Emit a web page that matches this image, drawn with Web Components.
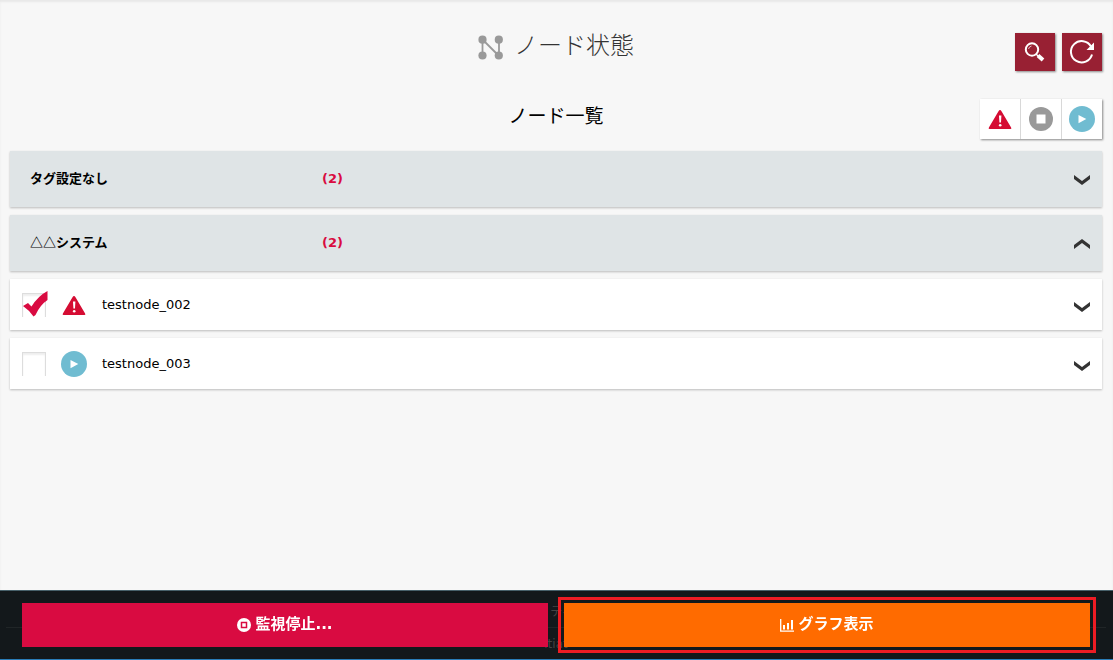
<!DOCTYPE html>
<html lang="ja">
<head>
<meta charset="utf-8">
<meta name="viewport" content="width=device-width, initial-scale=1">
<title>ノード状態</title>
<style>
  body {
    margin: 0;
    background: #f7f7f7;
    color: #000;
    font-family: "DejaVu Sans", "Noto Sans CJK JP", sans-serif;
    font-size: 13px;
    line-height: 20px;
  }
</style>
</head>
<body>
<node-app></node-app>

<script>
const ICONS = {
  nodes: '<svg viewBox="0 0 26 26" width="26" height="26" aria-hidden="true"><path d="M4.500 4.500V21M21 4.500V21M4.500 4.500L21 21" stroke="#999" stroke-width="1.800" fill="none"/><g fill="#999"><circle cx="4.500" cy="4.700" r="4.100"/><circle cx="20.800" cy="4.700" r="4.100"/><circle cx="4.500" cy="20.500" r="4.100"/><circle cx="20.800" cy="20.500" r="4.100"/></g></svg>',
  search: '<svg viewBox="0 0 40 38" width="40" height="38" aria-hidden="true"><circle cx="17" cy="16.500" r="6.200" fill="none" stroke="#fff" stroke-width="2"/><path d="M13.500 16a4 4 0 0 1 3-3" fill="none" stroke="#fff" stroke-width="1" opacity=".7"/><path d="M21 21l2 2" stroke="#fff" stroke-width="1.200"/><path d="M23 22.500l5 4.500" stroke="#fff" stroke-width="4"/></svg>',
  refresh: '<svg viewBox="0 0 40 38" width="40" height="38" aria-hidden="true"><path d="M29 13.500A10.700 10.700 0 1 0 30 21.500" fill="none" stroke="#fff" stroke-width="2"/><path d="M32 9.500V17H24.500z" fill="#fff"/></svg>',
  warning: '<svg viewBox="0 0 26 26" width="26" height="26" aria-hidden="true"><path d="M11.500 5.200Q13 2.800 14.500 5.200L24.100 21.500Q25 23 23.300 23H2.700Q1 23 1.900 21.500Z" fill="#d50c33"/><path d="M12 9.500h2.400l-.4 7h-1.600z" fill="#fff"/><circle cx="13.200" cy="19.300" r="1.300" fill="#fff"/></svg>',
  stopped: '<svg viewBox="0 0 26 26" width="26" height="26" aria-hidden="true"><circle cx="13" cy="13" r="12" fill="#999"/><rect x="8.500" y="8.500" width="9" height="9" fill="#fff"/></svg>',
  running: '<svg viewBox="0 0 26 26" width="26" height="26" aria-hidden="true"><circle cx="13" cy="13" r="13" fill="#70bcd1"/><path d="M9.500 9v8.200l7.800-4.100z" fill="#fff"/></svg>',
  stop: '<svg viewBox="0 0 14 14" width="14" height="14" aria-hidden="true"><circle cx="7" cy="7" r="7" fill="#fff"/><rect x="4.500" y="4.500" width="5" height="5" fill="none" stroke="#d90b41" stroke-width="1.500"/></svg>',
  graph: '<svg viewBox="0 0 14 14" width="14" height="14" aria-hidden="true"><path d="M.7 1v12.200H14" fill="none" stroke="#fff" stroke-width="1.300"/><path d="M3 7h2v4.500H3zM7 5h2v6.500H7zM11 2h2v9.500h-2z" fill="#fff"/></svg>',
  chevron: '<svg viewBox="0 0 16 10" width="16" height="10" aria-hidden="true"><path d="M0 0L8 6L16 0V4L8 10L0 4Z" fill="#333"/></svg>'
};

function define(name, render) {
  customElements.define(name, class extends HTMLElement {
    connectedCallback() {
      if (this.shadowRoot) return;
      this.attachShadow({ mode: 'open' }).innerHTML = render(this);
    }
  });
}

define('ui-icon', el => `
  <style>:host, svg { display: block; flex: none; }</style>
  ${ICONS[el.getAttribute('name')]}`);

define('tool-button', el => `
  <style>
    :host { display: block; }
    button {
      display: block; padding: 0; border: 0; cursor: pointer;
      background: #982033; box-shadow: 1px 1px 2px #888;
    }
  </style>
  <button type="button" aria-label="${el.getAttribute('label')}"><ui-icon name="${el.getAttribute('icon')}"></ui-icon></button>`);

define('status-filter', () => `
  <style>
    :host { display: flex; gap: 1px; background: #d8d8d8; box-shadow: 1px 1px 2px #888; }
    button {
      display: flex; align-items: center; justify-content: center;
      width: 40px; height: 40px; padding: 0; border: 0; background: #fff; cursor: pointer;
    }
  </style>
  <button type="button" aria-label="警告"><ui-icon name="warning"></ui-icon></button>
  <button type="button" aria-label="停止"><ui-icon name="stopped"></ui-icon></button>
  <button type="button" aria-label="稼働"><ui-icon name="running"></ui-icon></button>`);

define('page-heading', () => `
  <style>
    :host { display: grid; grid-template-columns: 1fr auto 1fr; align-items: start; }
    .tools { justify-self: end; display: flex; gap: 7px; }
  </style>
  <span></span>
  <slot></slot>
  <div class="tools"><slot name="tools"></slot></div>`);

define('expand-button', el => `
  <style>
    :host { display: block; }
    button { display: block; padding: 4px; border: 0; background: none; cursor: pointer; }
    :host([open]) button { transform: rotate(180deg); }
  </style>
  <button type="button" aria-label="開閉" aria-expanded="${el.hasAttribute('open')}"><ui-icon name="chevron"></ui-icon></button>`);

define('tag-group', el => `
  <style>
    :host {
      display: grid; grid-template-columns: 292px 1fr auto; align-items: center;
      box-sizing: border-box; height: 56px; padding: 0 8px 0 20px;
      background: #dfe4e6; box-shadow: 0 1px 2px #bbb;
      font-weight: bold;
    }
    .name { font-family: "Noto Sans CJK JP", sans-serif; padding-bottom: 2px; }
    .count { color: #d90b41; }
    expand-button { padding-top: 2px; }
  </style>
  <span class="name"><slot></slot></span>
  <span class="count">(${el.getAttribute('count')})</span>
  <expand-button ${el.hasAttribute('open') ? 'open' : ''}></expand-button>`);

define('node-row', el => `
  <style>
    :host {
      display: flex; align-items: center;
      box-sizing: border-box; height: 51px; padding: 0 8px 0 12px;
      background: #fff; box-shadow: 0 1px 2px #bbb;
    }
    label { flex: 1; display: flex; align-items: center; }
    .box { position: relative; display: block; width: 24px; height: 24px; margin-right: 15px; }
    input {
      appearance: none; display: block; box-sizing: border-box; width: 24px; height: 24px; margin: 0;
      border: 1px solid #ddd; border-bottom: 0; background: #fff;
      box-shadow: inset 0 2px 2px #eee;
    }
    .tick { position: absolute; left: 1px; top: -2px; display: none; }
    input:checked + .tick { display: block; }
    .name { padding-left: 15px; }
    expand-button { padding-top: 4px; }
  </style>
  <label>
    <span class="box">
      <input type="checkbox" ${el.hasAttribute('checked') ? 'checked' : ''}>
      <svg class="tick" viewBox="0 0 25 26" width="25" height="26" aria-hidden="true"><path d="M0 15L5 12L8.500 15.500Q15 5 24.500 0V9Q17 14 12.500 24L10.500 25.500Q6 19 0 15Z" fill="#d90b41"/></svg>
    </span>
    <ui-icon name="${el.getAttribute('state')}"></ui-icon>
    <span class="name"><slot></slot></span>
  </label>
  <expand-button></expand-button>`);

define('page-footer', () => `
  <style>
    :host { display: block; background: #13181b; color: #444; font-size: 12px; text-align: center; }
    p { margin: 0 7px 0 6px; padding: 11px 0 5px; }
    p + p { padding: 6px 0; border-top: 1px solid #202527; }
  </style>
  <p>リティ</p>
  <p>itiat</p>`);

define('action-button', el => `
  <style>
    :host { display: block; flex: 1; }
    button {
      display: flex; align-items: center; justify-content: center; gap: 4px;
      width: 100%; height: 44px; padding: 0; border: 0; cursor: pointer;
      background: #d90b41; color: #fff;
      font: bold 15px/20px "DejaVu Sans", "Noto Sans CJK JP", sans-serif;
    }
    span { padding-bottom: 2px; }
    :host([highlight]) button { background: #ff6b00; outline: 3px solid #ed1c24; outline-offset: 3px; }
  </style>
  <button type="button"><ui-icon name="${el.getAttribute('icon')}"></ui-icon><span><slot></slot></span></button>`);

define('action-bar', () => `
  <style>
    :host {
      position: fixed; left: 0; right: 0; bottom: 0;
      display: flex; gap: 16px; padding: 12px 23px 12px 22px;
      border-top: 1px solid #47606a; border-bottom: 1px solid #2a7db8;
    }
  </style>
  <slot></slot>`);

define('node-app', () => `
  <style>
    :host { display: flex; flex-direction: column; min-height: 100vh; box-shadow: inset 0 2px 2px #e8e8e8; }
    main { flex: 1; padding: 27px 11px 16px 10px; }
    h1, h2 { margin: 0; font-family: "Noto Sans CJK JP", sans-serif; }
    h1 { display: flex; align-items: center; gap: 10px; color: #333; font-size: 24px; font-weight: 300; line-height: 34px; }
    h1 ui-icon { padding-top: 7px; }
    h2 { font-size: 19px; font-weight: 400; line-height: 32px; }
    page-heading:first-child { height: 72px; }
    page-heading tool-button { padding-top: 6px; }
    .list { display: grid; gap: 8px; padding-top: 12px; }
  </style>
  <main>
    <page-heading>
      <h1><ui-icon name="nodes"></ui-icon>ノード状態</h1>
      <tool-button slot="tools" icon="search" label="検索"></tool-button>
      <tool-button slot="tools" icon="refresh" label="更新"></tool-button>
    </page-heading>
    <page-heading>
      <h2>ノード一覧</h2>
      <status-filter slot="tools"></status-filter>
    </page-heading>
    <div class="list">
      <tag-group count="2">タグ設定なし</tag-group>
      <tag-group count="2" open>△△システム</tag-group>
      <node-row state="warning" checked>testnode_002</node-row>
      <node-row state="running">testnode_003</node-row>
    </div>
  </main>
  <page-footer></page-footer>
  <action-bar>
    <action-button icon="stop">監視停止...</action-button>
    <action-button icon="graph" highlight>グラフ表示</action-button>
  </action-bar>`);
</script>
</body>
</html>
